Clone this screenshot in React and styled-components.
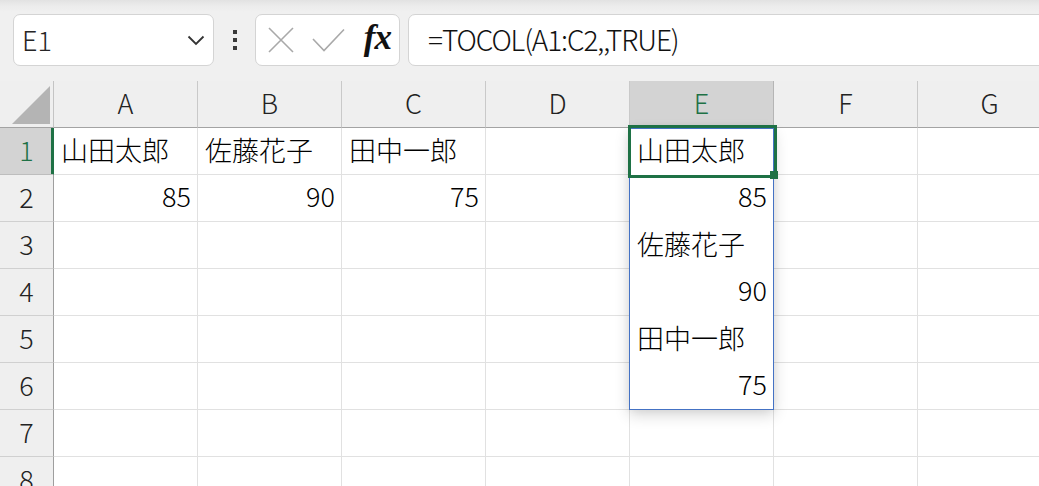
import React from 'react';
import styled, { createGlobalStyle } from 'styled-components';

const GlobalStyle = createGlobalStyle`
  html, body {
    margin: 0;
    padding: 0;
    background: #ffffff;
    overflow: hidden;
  }
  body {
    font-family: 'Noto Sans CJK JP', 'Noto Sans', sans-serif;
    font-weight: 300;
    color: #000;
  }
`;

const GREEN = '#1e7145';
const BLUE = '#4472c4';

const Page = styled.div`
  width: 1039px;
  height: 486px;
  overflow: hidden;
  display: flex;
  flex-direction: column;
`;

const Toolbar = styled.div`
  height: 81px;
  flex: none;
  display: flex;
  align-items: center;
  padding: 0 0 1px 13px;
  box-sizing: border-box;
  background: linear-gradient(#e2e2e2 0px, #ececec 6px, #f0f0f0 12px, #f0f0f0 100%);
`;

const Box = styled.div`
  height: 52px;
  box-sizing: border-box;
  background: #fff;
  border: 1px solid #d4d4d4;
  border-radius: 7px;
  display: flex;
  align-items: center;
  flex: none;
`;

const NameBox = styled(Box)`
  width: 201px;
  padding: 0 8px 2px 8px;
  justify-content: space-between;
  font-size: 27px;
  color: #262626;
  svg { margin-top: 2px; }
`;

const Dots = styled.div`
  width: 41px;
  display: flex;
  flex-direction: column;
  align-items: center;
  gap: 4px;
  flex: none;
  span {
    width: 4px;
    height: 4px;
    background: #3a3a3a;
  }
`;

const FuncBox = styled(Box)`
  width: 145px;
  padding: 0 8px 0 12px;
  justify-content: space-between;
`;

const Fx = styled.span`
  font-family: 'Liberation Serif', 'DejaVu Serif', serif;
  font-style: italic;
  font-weight: bold;
  font-size: 35px;
  color: #111;
  letter-spacing: -1px;
  margin-top: -4px;
`;

const FormulaBox = styled(Box)`
  flex: 1;
  margin-left: 8px;
  margin-right: -20px;
  padding: 0 0 3px 19px;
  font-size: 28px;
  letter-spacing: -1.1px;
  color: #111;
`;

const Sheet = styled.div`
  display: grid;
  grid-template-columns: 54px repeat(7, 144px);
  grid-auto-rows: 47px;
`;

const Cell = styled.div`
  grid-row: ${p => p.$row};
  grid-column: ${p => p.$col};
  box-sizing: border-box;
  border-right: 1px solid #e1e1e1;
  border-bottom: 1px solid ${p => (p.$noLine ? '#fff' : '#e1e1e1')};
  display: flex;
  align-items: center;
  justify-content: ${p => (p.$num ? 'flex-end' : 'flex-start')};
  padding: ${p => (p.$num ? '0 6px 5px 0' : '0 0 4px 7px')};
  font-size: 27px;
  white-space: nowrap;
`;

const ColHead = styled.div`
  grid-row: 1;
  grid-column: ${p => p.$col};
  box-sizing: border-box;
  background: ${p => (p.$active ? '#d3d3d3' : '#efefef')};
  color: ${p => (p.$active ? GREEN : '#222')};
  border-right: 1px solid ${p => (p.$active ? '#b5b5b5' : '#c9c9c9')};
  border-bottom: 1px solid #a3a3a3;
  display: flex;
  align-items: center;
  justify-content: center;
  font-size: 27px;
  padding-bottom: 3px;
`;

const RowHead = styled.div`
  grid-row: ${p => p.$row};
  grid-column: 1;
  box-sizing: border-box;
  background: ${p => (p.$active ? '#d3d3d3' : '#efefef')};
  color: ${p => (p.$active ? GREEN : '#222')};
  border-right: 1px solid ${p => (p.$active ? GREEN : '#9e9e9e')};
  box-shadow: ${p => (p.$active ? `inset -2px 0 0 ${GREEN}` : 'none')};
  border-bottom: 1px solid ${p => (p.$active ? '#bdbdbd' : '#d0d0d0')};
  display: flex;
  align-items: center;
  justify-content: center;
  font-size: 27px;
  padding-bottom: 4px;
`;

const Corner = styled.div`
  grid-row: 1;
  grid-column: 1;
  box-sizing: border-box;
  background: #efefef;
  border-right: 1px solid #c4c4c4;
  border-bottom: 1px solid #a3a3a3;
  display: flex;
  align-items: flex-end;
  justify-content: flex-end;
  padding: 0 3px 3px 0;
`;

const Spill = styled.div`
  grid-row: 2 / span 6;
  grid-column: 6;
  margin-left: -1px;
  border: 1px solid ${BLUE};
  box-shadow: 0 5px 14px rgba(0, 0, 0, 0.16), 0 0 8px rgba(0, 0, 0, 0.06);
  z-index: 2;
  pointer-events: none;
`;

const Selection = styled.div`
  grid-row: 2;
  grid-column: 6;
  margin: -3px -3px -3px -2px;
  border: 3px solid ${GREEN};
  position: relative;
  z-index: 3;
  pointer-events: none;
`;

const Handle = styled.div`
  position: absolute;
  right: -4px;
  bottom: -4px;
  width: 8px;
  height: 8px;
  background: ${GREEN};
`;

const cols = ['A', 'B', 'C', 'D', 'E', 'F', 'G'];
const rows = [1, 2, 3, 4, 5, 6, 7, 8];

const data = {
  A1: '山田太郎', B1: '佐藤花子', C1: '田中一郎', E1: '山田太郎',
  A2: 85, B2: 90, C2: 75, E2: 85,
  E3: '佐藤花子', E4: 90, E5: '田中一郎', E6: 75,
};

function App() {
  return (
    <>
      <GlobalStyle />
      <Page>
        <Toolbar>
          <NameBox>
            <span>E1</span>
            <svg width="18" height="11" viewBox="0 0 18 11">
              <path d="M1.5 1.5 L9 9 L16.5 1.5" fill="none" stroke="#333" strokeWidth="1.8" />
            </svg>
          </NameBox>
          <Dots><span /><span /><span /></Dots>
          <FuncBox>
            <svg width="26" height="26" viewBox="0 0 26 26">
              <path d="M1 1 L25 25 M25 1 L1 25" stroke="#a9a9a9" strokeWidth="1.6" fill="none" />
            </svg>
            <svg width="33" height="24" viewBox="0 0 33 24">
              <path d="M1 11 L12 22.5 L32 1.5" stroke="#a9a9a9" strokeWidth="1.6" fill="none" />
            </svg>
            <Fx>fx</Fx>
          </FuncBox>
          <FormulaBox>=TOCOL(A1:C2,,TRUE)</FormulaBox>
        </Toolbar>

        <Sheet>
          <Corner>
            <svg width="38" height="38" viewBox="0 0 38 38">
              <path d="M38 0 L38 38 L0 38 Z" fill="#b4b4b4" />
            </svg>
          </Corner>
          {cols.map((c, i) => (
            <ColHead key={c} $col={i + 2} $active={c === 'E'}>{c}</ColHead>
          ))}
          {rows.map(r => (
            <React.Fragment key={r}>
              <RowHead $row={r + 1} $active={r === 1}>{r}</RowHead>
              {cols.map((c, i) => {
                const v = data[c + r];
                return (
                  <Cell
                    key={c + r}
                    $row={r + 1}
                    $col={i + 2}
                    $num={typeof v === 'number'}
                    $noLine={c === 'E' && r < 6}
                  >
                    {v}
                  </Cell>
                );
              })}
            </React.Fragment>
          ))}
          <Spill />
          <Selection><Handle /></Selection>
        </Sheet>
      </Page>
    </>
  );
}

export default App;
